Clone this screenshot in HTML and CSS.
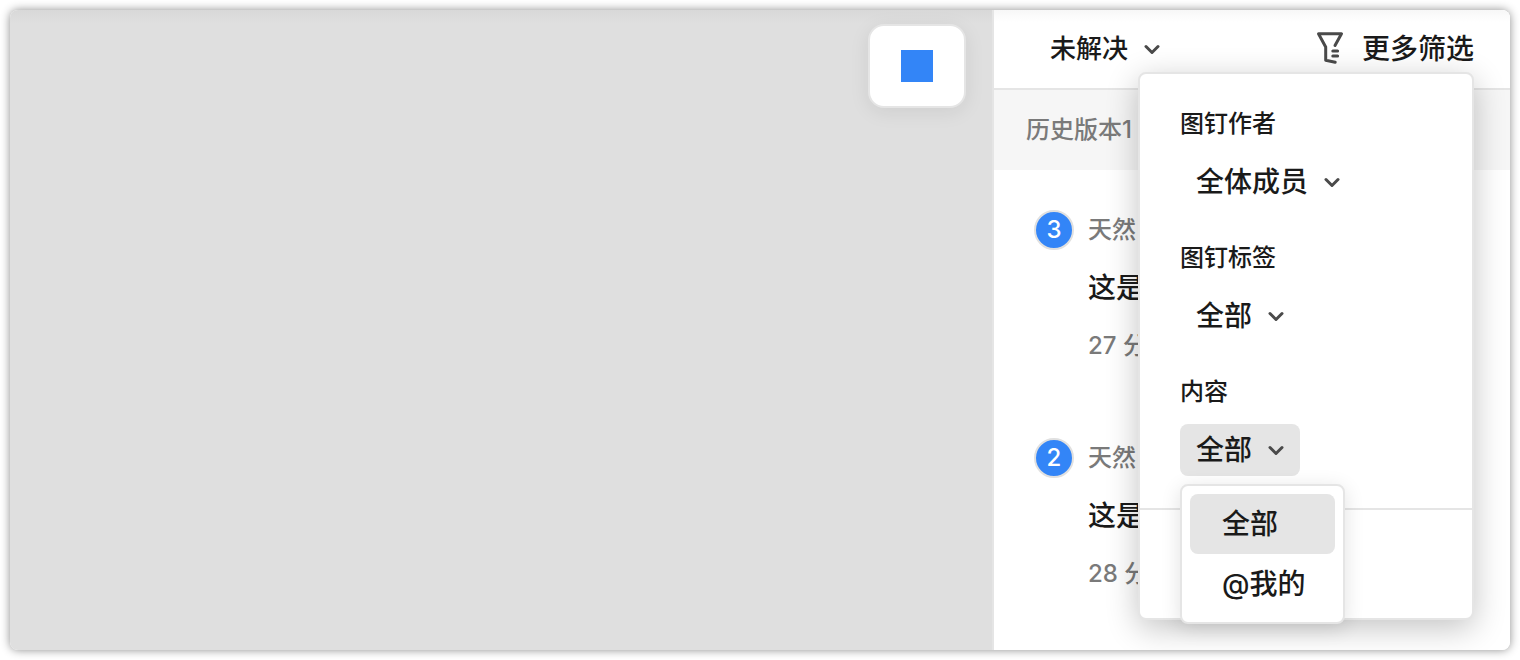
FILE: index.html
```
<!DOCTYPE html>
<html lang="zh-CN">
<head>
<meta charset="UTF-8">
<title>图钉</title>
<link rel="stylesheet" href="styles.css">
</head>
<body>
<div class="window">
    <main class="canvas">
        <button class="color-tool" type="button" aria-label="颜色"><span class="swatch"></span></button>
    </main>

    <aside class="panel">
        <header class="panel-header">
            <span class="dropdown dropdown-status">
                <select aria-label="状态"><option>未解决</option></select>
                <svg class="chevron" viewBox="0 0 16 16"><path d="M2 5.5l6 6 6-6"/></svg>
            </span>
            <div class="filter">
                <button class="filter-button" type="button" aria-expanded="true">
                    <svg class="funnel" viewBox="0 0 28 34"><path d="M19 13.500L25.500 1.700H2.500L9.700 15V28.200L19.200 30.200"/><path d="M16.800 19h4.800M16.800 24h4.800"/></svg>
                    更多筛选
                </button>

                <div class="popover">
                    <div class="filter-fields">
                        <div class="field">
                            <label class="field-label" for="author">图钉作者</label>
                            <span class="dropdown">
                                <select id="author"><option>全体成员</option></select>
                                <svg class="chevron" viewBox="0 0 16 16"><path d="M2 5.5l6 6 6-6"/></svg>
                            </span>
                        </div>
                        <div class="field">
                            <label class="field-label" for="tag">图钉标签</label>
                            <span class="dropdown">
                                <select id="tag"><option>全部</option></select>
                                <svg class="chevron" viewBox="0 0 16 16"><path d="M2 5.5l6 6 6-6"/></svg>
                            </span>
                        </div>
                        <div class="field">
                            <label class="field-label" for="content">内容</label>
                            <span class="dropdown open">
                                <select id="content"><option>全部</option></select>
                                <svg class="chevron" viewBox="0 0 16 16"><path d="M2 5.5l6 6 6-6"/></svg>
                                <span class="menu">
                                    <button class="menu-item selected" type="button">全部</button>
                                    <button class="menu-item" type="button">@我的</button>
                                </span>
                            </span>
                        </div>
                    </div>
                    <div class="popover-footer"></div>
                </div>
            </div>
        </header>

        <h2 class="version">历史版本1</h2>

        <ul class="pins">
            <li class="pin">
                <span class="pin-number">3</span>
                <div class="pin-body">
                    <span class="meta">天然</span>
                    <p class="pin-text">这是</p>
                    <time class="meta">27 分</time>
                </div>
            </li>
            <li class="pin">
                <span class="pin-number">2</span>
                <div class="pin-body">
                    <span class="meta">天然</span>
                    <p class="pin-text">这是</p>
                    <time class="meta">28 分</time>
                </div>
            </li>
        </ul>
    </aside>
</div>
</body>
</html>
```
FILE: styles.css
```
* {box-sizing: border-box;}
body {margin: 0; padding: 10px; height: 100vh; background: #fff; color: #1a1a1a; font-family: Inter, "Noto Sans CJK SC", sans-serif; font-size: 28px; font-weight: 500; line-height: 40px;}
button, select {border: 0; margin: 0; padding: 0; background: none; color: inherit; font: inherit;}
p, h2, ul {margin: 0; padding: 0; font: inherit; list-style: none;}

.window {display: flex; height: 100%; border-radius: 8px; overflow: hidden; box-shadow: 0 0 10px rgba(0, 0, 0, 0.45);}

/* Canvas */
.canvas {flex: 1; display: flex; justify-content: flex-end; align-items: flex-start; padding: 14px 26px; background: linear-gradient(#d8d8d8, #dfdfdf 14px);}
.color-tool {display: grid; place-items: center; width: 98px; height: 84px; background: #fff; border: 2px solid #e5e5e5; border-radius: 16px; box-shadow: 0 4px 20px rgba(0, 0, 0, 0.08);}
.swatch {width: 32px; height: 32px; background: #3385f7;}

/* Comments panel */
.panel {width: 518px; background: #fff; border-left: 2px solid #e5e5e5;}
.panel-header {display: flex; justify-content: space-between; align-items: center; height: 80px; padding: 0 36px 0 40px; border-bottom: 2px solid #e5e5e5; background: linear-gradient(#f7f7f7, #fff 12px);}
.version {padding: 20px 32px; background: #f6f6f6; color: #7a7a7a; font-size: 24px;}

.dropdown {position: relative; display: inline-grid; align-items: center; border-radius: 8px;}
.dropdown select, .dropdown > .chevron {grid-area: 1 / 1;}
.dropdown select {appearance: none; height: 52px; padding: 0 47px 0 16px;}
.dropdown-status {font-size: 26px;}
.dropdown.open {background: #e5e5e5;}
.chevron {justify-self: end; width: 16px; height: 16px; margin-right: 16px; pointer-events: none;}
.chevron, .funnel {fill: none; stroke: #4a4a4a; stroke-width: 3; stroke-linecap: round; stroke-linejoin: round;}

.filter {position: relative;}
.filter-button {display: flex; align-items: center; gap: 18px; height: 46px;}
.funnel {width: 28px; height: 34px;}

/* Filter popover */
.popover {position: absolute; z-index: 1; top: 100%; right: 0; width: 336px; background: #fff; border: 2px solid #e5e5e5; border-radius: 8px; box-shadow: 0 8px 32px rgba(0, 0, 0, 0.24);}
.filter-fields {display: grid; gap: 30px; padding: 30px 40px 32px; border-bottom: 2px solid #e5e5e5;}
.field {display: grid; justify-items: start; gap: 12px;}
.field-label {font-size: 24px;}
.popover-footer {height: 108px;}
.menu {position: absolute; z-index: 2; top: 60px; left: 0; width: 165px; padding: 8px; background: #fff; border: 2px solid #e5e5e5; border-radius: 8px; box-shadow: 0 4px 20px rgba(0, 0, 0, 0.12);}
.menu-item {display: block; width: 100%; height: 60px; padding: 0 0 0 32px; border-radius: 8px; text-align: left; white-space: nowrap;}
.menu-item.selected {background: #e5e5e5;}

/* Pin list */
.pin {display: flex; gap: 14px; padding: 40px 40px 32px;}
.pin-number {width: 40px; height: 40px; border: 2px solid #e0e0e0; border-radius: 50%; background: #3385f7; color: #fff; font-size: 24px; line-height: 36px; text-align: center;}
.pin-body {display: grid; gap: 18px;}
.meta {color: #7a7a7a; font-size: 24px;}
```
